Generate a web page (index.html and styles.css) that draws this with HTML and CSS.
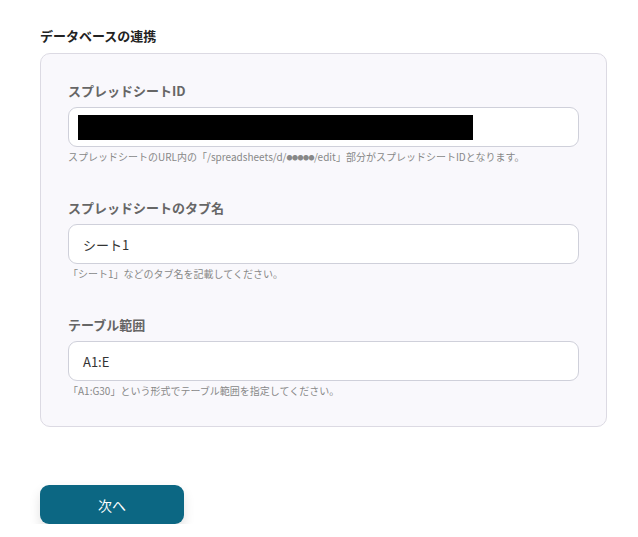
FILE: index.html
```html
<!DOCTYPE html>
<html lang="ja">
<head>
    <meta charset="UTF-8">
    <meta name="viewport" content="width=device-width, initial-scale=1.0">
    <title>データベースの連携</title>
    <link rel="stylesheet" href="styles.css">
</head>
<body>
    <div class="container">
        <h2 class="section-title">データベースの連携</h2>

        <div class="form-card">
            <div class="field">
                <label class="field-label">スプレッドシートID</label>
                <div class="field-input">
                    <span class="redacted"></span>
                </div>
                <p class="field-hint">スプレッドシートのURL内の「/spreadsheets/d/<span class="dots">●●●●●</span>/edit」部分がスプレッドシートIDとなります。</p>
            </div>

            <div class="field">
                <label class="field-label">スプレッドシートのタブ名</label>
                <div class="field-input">シート1</div>
                <p class="field-hint">「シート1」などのタブ名を記載してください。</p>
            </div>

            <div class="field">
                <label class="field-label">テーブル範囲</label>
                <div class="field-input">A1:E</div>
                <p class="field-hint">「A1:G30」という形式でテーブル範囲を指定してください。</p>
            </div>
        </div>

        <button class="next-button" type="button">次へ</button>
    </div>
</body>
</html>
```

FILE: styles.css
```css
body {
    font-family: "Noto Sans CJK JP", "Noto Sans", sans-serif;
    background-color: #ffffff;
    color: #222;
    margin: 0;
    padding: 26px 31px 0 40px;
}

.container {
    width: 567px;
}

.section-title {
    font-size: 13px;
    font-weight: bold;
    line-height: 20px;
    margin: 0 0 7px;
    color: #222;
}

.form-card {
    background-color: #f9f8fc;
    border: 1px solid #dcdae3;
    border-radius: 10px;
    padding: 27px 27px 28px;
}

.field + .field {
    margin-top: 34px;
}

.field-label {
    display: block;
    font-size: 13px;
    font-weight: bold;
    line-height: 20px;
    color: #666;
    margin-bottom: 6px;
}

.field-input {
    box-sizing: border-box;
    height: 40px;
    display: flex;
    align-items: center;
    padding: 0 14px 0 9px;
    background-color: #fff;
    border: 1px solid #cfd0da;
    border-radius: 9px;
    font-size: 13px;
    color: #333;
}

.field-input:not(:has(.redacted)) {
    padding-left: 14px;
}

.redacted {
    display: block;
    width: 395px;
    height: 25px;
    background-color: #000;
}

.field-hint {
    font-size: 10px;
    line-height: 14px;
    height: 14px;
    color: #888;
    margin: 3px 0 0;
    white-space: nowrap;
}

.field-hint .dots {
    font-size: 6px;
    line-height: 0;
    letter-spacing: -0.5px;
    vertical-align: 1px;
}

.next-button {
    display: block;
    margin-top: 58px;
    width: 144px;
    height: 39px;
    background-color: #0c6783;
    color: white;
    border: none;
    border-radius: 9px;
    font-family: inherit;
    font-size: 14px;
    box-shadow: 0 6px 12px rgba(0, 0, 0, 0.12);
    cursor: pointer;
}
```
